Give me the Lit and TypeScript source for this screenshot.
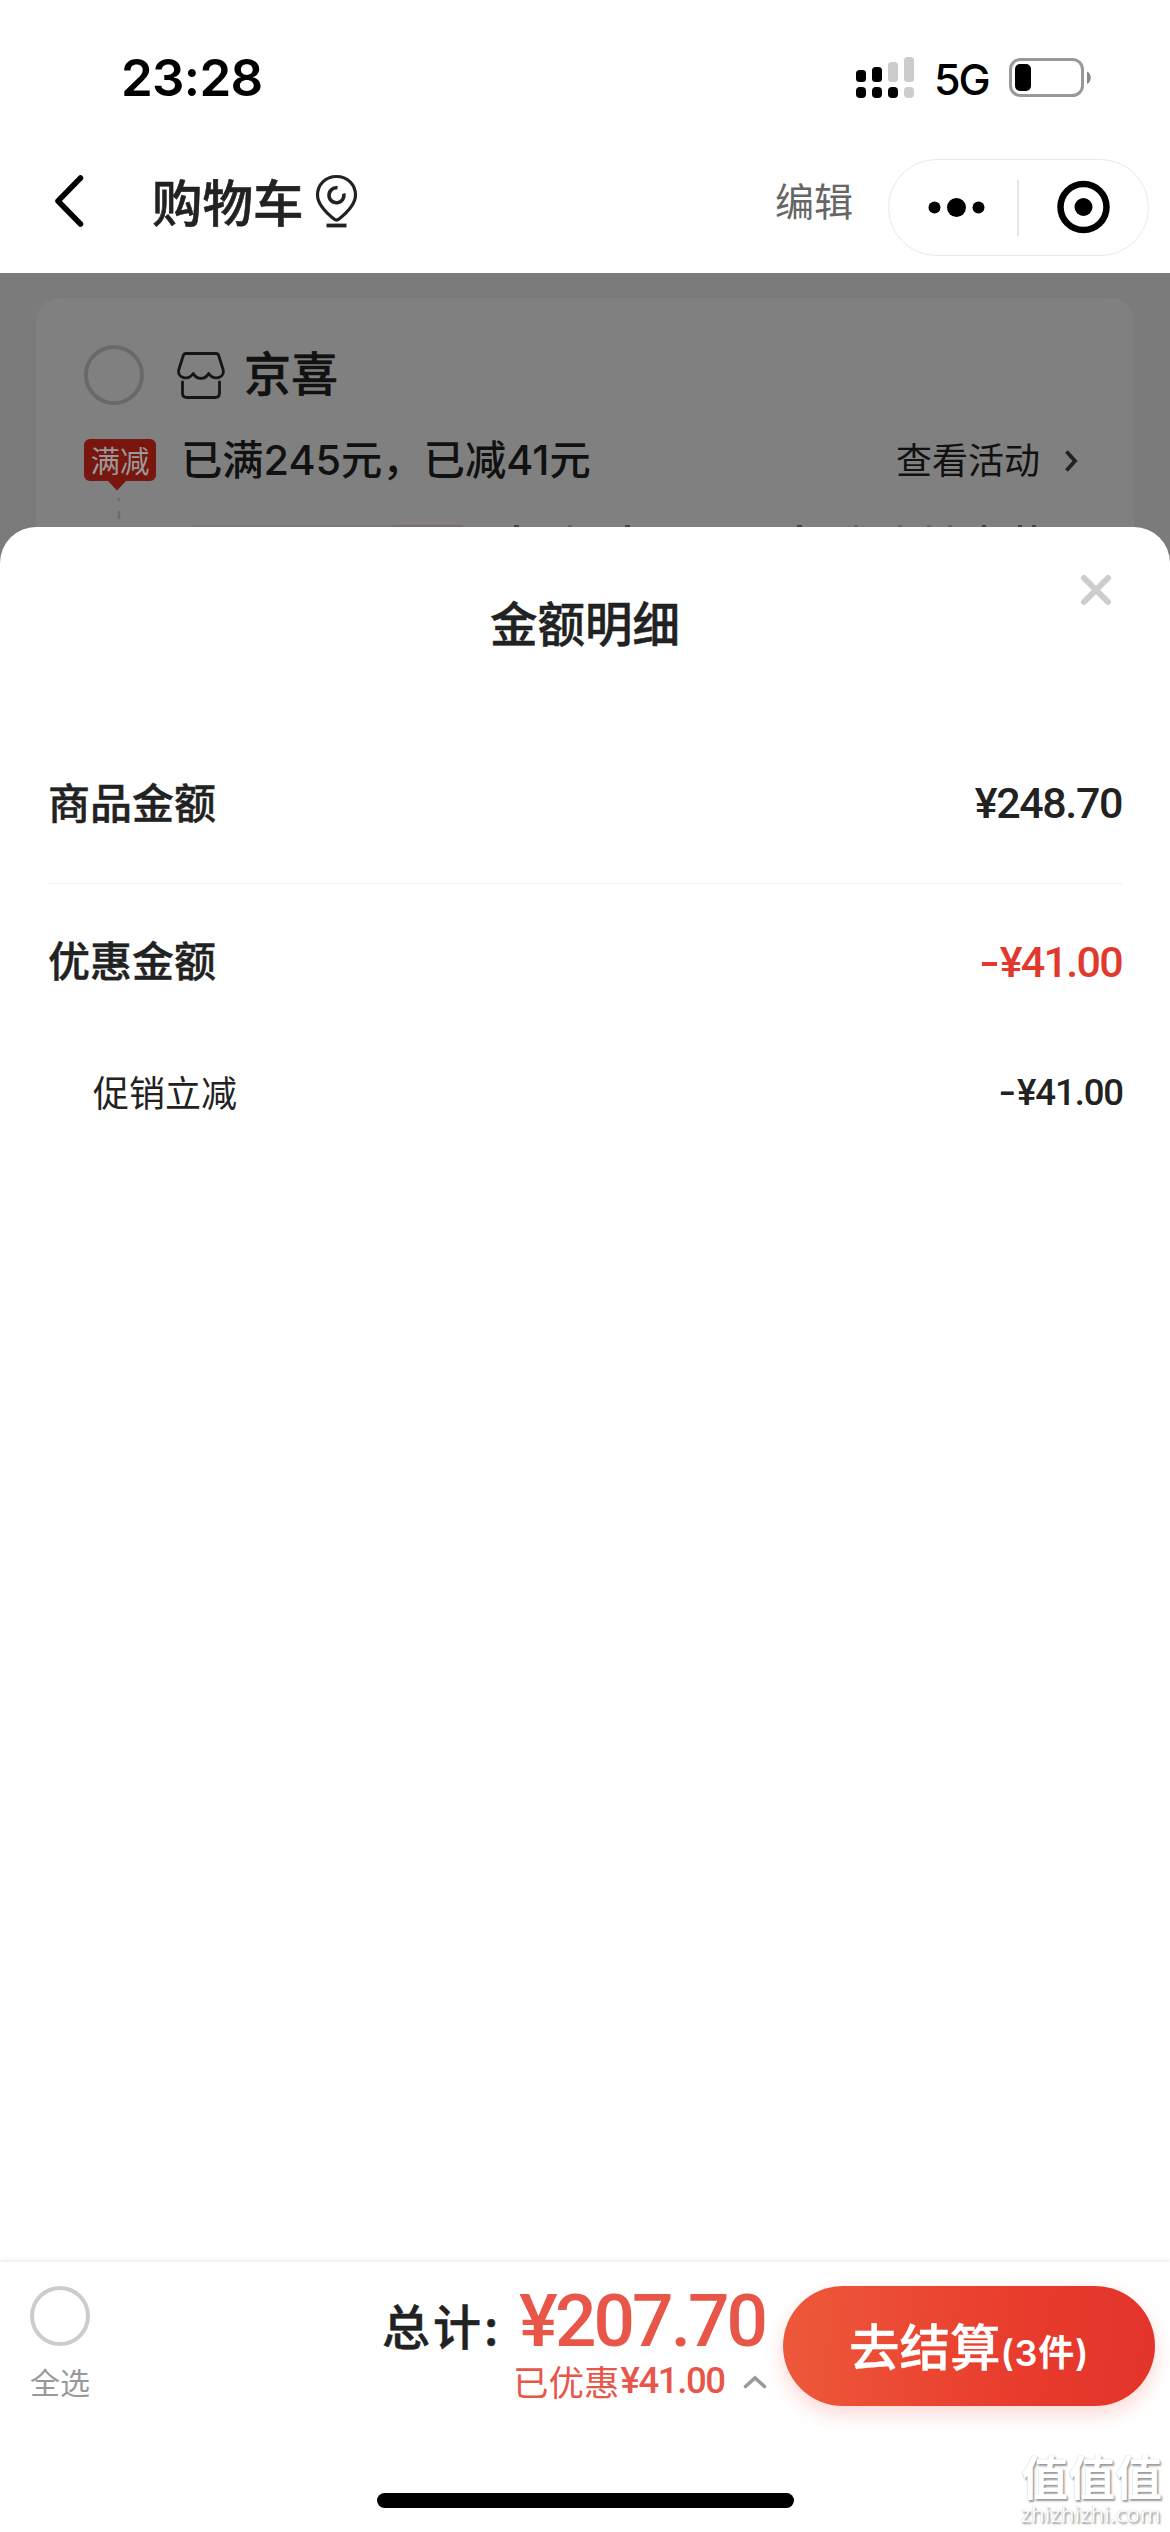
import { LitElement, html, css } from "lit";
import { customElement, property } from "lit/decorators.js";

@customElement("status-bar")
class StatusBar extends LitElement {
  static styles = css`
    :host { display: flex; align-items: center; height: 156px; padding: 0 78px 0 121px; box-sizing: border-box; }
    .time { flex: 1; font: 600 51px/60px Inter, sans-serif; letter-spacing: -0.7px; color: #000; }
    .signal { width: 58px; height: 42px; margin-right: 20px; }
    .net { font: 500 43px/60px Inter, sans-serif; width: 55px; letter-spacing: -2px; color: #000; margin-right: 20px; padding-top: 2px; }
    .battery { width: 83px; height: 40px; }
  `;
  render() {
    return html`
      <div class="time">23:28</div>
      <svg class="signal" viewBox="0 0 58 42">
        <rect x="0" y="13" width="10" height="12" rx="3.5" />
        <rect x="16" y="10" width="10" height="15" rx="3.5" />
        <rect x="32" y="5" width="10" height="20" rx="3.5" fill="#ccc" />
        <rect x="48" y="0" width="10" height="25" rx="3.5" fill="#ccc" />
        <rect x="0" y="30" width="10" height="11" rx="4" />
        <rect x="16" y="30" width="10" height="11" rx="4" />
        <rect x="32" y="30" width="10" height="11" rx="4" />
        <rect x="48" y="30" width="10" height="11" rx="4" fill="#ccc" />
      </svg>
      <div class="net">5G</div>
      <svg class="battery" viewBox="0 0 83 40">
        <rect x="1.5" y="1.5" width="72" height="36" rx="10" fill="none" stroke="#999" stroke-width="3" />
        <rect x="6" y="6" width="16" height="27" rx="5" />
        <path d="M78 13.5c5 2 5 10.5 0 12.5z" fill="#888" />
      </svg>
    `;
  }
}

@customElement("nav-header")
class NavHeader extends LitElement {
  static styles = css`
    :host { display: flex; align-items: center; height: 117px; padding: 0 21px 28px 52px; box-sizing: border-box; }
    .back { width: 34px; height: 56px; margin: 0 66px 0 0; }
    .title { font-size: 50.5px; font-weight: 500; -webkit-text-stroke: 0.6px #222; line-height: 60px; color: #222; width: 163px; margin-top: -2px; }
    .pin { width: 43px; height: 54px; }
    .space { flex: 1; }
    .edit { font-size: 39px; line-height: 60px; color: #666; width: 78px; margin: -3px 35px 0 0; }
    .capsule { width: 261px; height: 97px; box-sizing: border-box; border: 1.5px solid #e9e9e9; border-radius: 49px; margin-top: 13px; flex: none; }
    .capsule svg { display: block; width: 259px; height: 95px; }
  `;
  render() {
    return html`
      <svg class="back" viewBox="0 0 34 56">
        <path d="M28.5 5L6 28l22.5 23" fill="none" stroke="#000" stroke-width="5.5" stroke-linecap="round" stroke-linejoin="round" />
      </svg>
      <div class="title">购物车</div>
      <svg class="pin" viewBox="0 0 43 54" fill="none" stroke="#222" stroke-width="3.2">
        <path d="M21.5 2.5c-11 0-19 8-19 18.5 0 10 9 18 16.500 24q2.500 2 5 0c7.500-6 16.500-14 16.500-24 0-10.500-8-18.500-19-18.500z" />
        <path d="M22.500 13.800a7.500 7.500 0 1 0 6.300 5.700" stroke-width="3.6" />
        <path d="M11.500 51.500h20" stroke-width="3.800" />
      </svg>
      <div class="space"></div>
      <div class="edit">编辑</div>
      <div class="capsule">
        <svg viewBox="0 0 259 95">
          <circle cx="45.5" cy="47.500" r="6" /><circle cx="67.500" cy="47.500" r="9.500" /><circle cx="89.500" cy="47.500" r="6" />
          <path d="M129 20v56" stroke="#d4d4d4" stroke-width="1.200" />
          <circle cx="194.500" cy="47" r="23" fill="none" stroke="#000" stroke-width="6.500" /><circle cx="194.500" cy="47" r="9" />
        </svg>
      </div>
    `;
  }
}

@customElement("shop-card")
class ShopCard extends LitElement {
  static styles = css`
    :host { display: block; background: #808080; border-radius: 24px 24px 0 0; height: 260px; padding: 45px 54px 0 48px; box-sizing: border-box; color: #111; }
    .row { display: flex; align-items: center; height: 64px; }
    .check { width: 60px; height: 60px; box-sizing: border-box; border: 4px solid #696969; border-radius: 50%; margin-right: 33px; }
    .shop { width: 48px; height: 48px; margin-right: 19px; }
    .name { font-size: 47px; font-weight: 500; -webkit-text-stroke: 0.5px #111; line-height: 60px; margin-top: -8px; }
    .promo { margin-top: 23px; height: 60px; }
    .tag { width: 72px; height: 54px; margin: 11px 25px 0 0; }
    .label { background: #7a1610; color: #999; border-radius: 6px; font-size: 29.5px; line-height: 41px; height: 42px; text-align: center; }
    .tip { display: block; width: 18px; height: 10px; margin-left: 24px; }
    .text { font-family: Inter, "Noto Sans CJK SC", sans-serif; font-size: 41.3px; font-weight: 500; line-height: 60px; flex: 1; white-space: nowrap; margin-top: -1px; }
    .more { font-size: 36px; line-height: 60px; margin-top: -5px; }
    .chev { width: 14px; height: 24px; margin: 2px 2px 0 24px; }
    .dash { display: block; width: 4px; height: 22px; margin: 8px 0 0 33px; }
    .next { display: block; width: 900px; height: 2px; margin: 5px 0 0 106px; }
  `;
  render() {
    return html`
      <div class="row">
        <div class="check"></div>
        <svg class="shop" viewBox="0 0 48 48" fill="none" stroke="#151515" stroke-width="2.800" stroke-linejoin="round" stroke-linecap="round">
          <path d="M9 2.500h30q2 0 2.700 2l4.500 14.500c1.500 8-9.500 11-14.500 3.500-3.500 6.500-12 6.500-15.500 0-5 7.500-16 4.500-14.500-3.500L6.300 4.500Q7 2.500 9 2.500z" />
          <path d="M5.500 31v11q0 4.500 4.500 4.500h28q4.500 0 4.500-4.500V31" />
        </svg>
        <div class="name">京喜</div>
      </div>
      <div class="row promo">
        <div class="tag">
          <div class="label">满减</div>
          <svg class="tip" viewBox="0 0 18 10"><path d="M0 0h18L9 9.500z" fill="#7a1610" /></svg>
        </div>
        <div class="text">已满245元，已减41元</div>
        <div class="more">查看活动</div>
        <svg class="chev" viewBox="0 0 14 24"><path d="M2.500 2.500L11 12l-8.500 9.500" fill="none" stroke="#222" stroke-width="3.800" /></svg>
      </div>
      <svg class="dash" viewBox="0 0 4 22"><path d="M2 0v3M2 13v8" stroke="#6c6c6c" stroke-width="2.500" /></svg>
      <svg class="next" viewBox="0 0 900 2">
        <path d="M3 1h200" stroke="#7b7777" stroke-width="2" />
        <path d="M203 1h70" stroke="#7b6c6c" stroke-width="2" />
        <path d="M324 1h5M435 1h5M607 1h5M792 1h4M828 1h4M842 1h4" stroke="#444" stroke-width="2" />
        <path d="M378 1h4M664 1h4M708 1h4M737 1h4M758 1h4" stroke="#666" stroke-width="2" />
      </svg>
    `;
  }
}

@customElement("amount-row")
class AmountRow extends LitElement {
  @property() label = "";
  @property() value = "";
  @property() kind = "";
  @property({ type: Boolean }) minus = false;
  static styles = css`
    :host { display: flex; justify-content: space-between; align-items: center; color: #222; }
    .label { font-size: 42px; line-height: 60px; font-weight: 500; -webkit-text-stroke: 0.4px; margin-top: -4px; }
    .value { font: 500 43px/60px Roboto, sans-serif; letter-spacing: -1.4px; margin-top: -1px; }
    .value.discount { color: #e1392e; letter-spacing: -1.7px; margin-top: 1px; }
    .label.sub { font-size: 36px; font-weight: 400; -webkit-text-stroke: 0; margin-top: -3px; }
    .value.sub { font-size: 36.5px; letter-spacing: -1.1px; margin-right: -1px; margin-top: 2px; }
    .minus { display: inline-block; transform: scaleX(1.35); margin-right: 5px; }
  `;
  render() {
    return html`<span class="label ${this.kind}">${this.label}</span><span class="value ${this.kind}">${this.minus ? html`<span class="minus">-</span>` : ""}${this.value}</span>`;
  }
}

@customElement("amount-sheet")
class AmountSheet extends LitElement {
  static styles = css`
    :host { display: block; background: #fff; border-radius: 36px 36px 0 0; position: relative; z-index: 1; padding: 65px 48px 0; box-sizing: border-box; }
    .title { text-align: center; font-size: 47.5px; line-height: 60px; font-weight: 500; -webkit-text-stroke: 0.5px #222; color: #222; }
    .close { position: absolute; top: 46px; right: 57px; width: 34px; height: 34px; }
    .r1 { height: 60px; margin-top: 121px; padding-bottom: 50px; border-bottom: 1.5px solid #eee; }
    .r2 { height: 60px; margin-top: 47px; }
    .r3 { height: 60px; margin-top: 71px; padding-left: 45px; }
  `;
  render() {
    return html`
      <svg class="close" viewBox="0 0 34 34"><path d="M5 5l24 24m0-24l-24 24" stroke="#ccc" stroke-width="6" stroke-linecap="round" /></svg>
      <div class="title">金额明细</div>
      <amount-row class="r1" label="商品金额" value="¥248.70"></amount-row>
      <amount-row class="r2" label="优惠金额" value="¥41.00" minus kind="discount"></amount-row>
      <amount-row class="r3" label="促销立减" value="¥41.00" minus kind="sub"></amount-row>
    `;
  }
}

@customElement("checkout-bar")
class CheckoutBar extends LitElement {
  static styles = css`
    :host { display: flex; flex-direction: column; height: 270px; background: #fff; box-shadow: 0 -1px 5px rgba(0, 0, 0, 0.1); position: relative; z-index: 2; }
    .row { display: flex; height: 231px; padding: 24px 15px 0 30px; box-sizing: border-box; }
    .all { width: 60px; text-align: center; font-size: 30px; line-height: 40px; color: #999; white-space: nowrap; }
    .check { width: 60px; height: 60px; box-sizing: border-box; border: 4px solid #ccc; border-radius: 50%; margin-bottom: 15px; }
    .sum { font-size: 48px; font-weight: 500; -webkit-text-stroke: 0.5px #222; line-height: 60px; letter-spacing: 3px; color: #222; margin: 8px 0 0 292px; width: 134px; white-space: nowrap; }
    .prices { width: 267px; color: #e8564a; }
    .total { font: 500 73px/70px Roboto, sans-serif; letter-spacing: -2.9px; white-space: nowrap; padding-left: 3px; }
    .saved { display: flex; align-items: center; font-size: 35.5px; line-height: 50px; white-space: nowrap; margin: -1px 0 0 -3px; }
    .amt { font: 500 36.5px/50px Roboto, sans-serif; letter-spacing: -1.4px; margin-left: 1px; padding-top: 1px; }
    .up { width: 24px; height: 16px; margin: 3px 0 0 18px; }
    .btn { width: 372px; height: 120px; border-radius: 60px; background: linear-gradient(95deg, #ee593a, #e83b2d 65%, #e2342a); box-shadow: 0 8px 20px rgba(235, 60, 45, 0.2); color: #fff; font-weight: 500; -webkit-text-stroke: 0.4px #fff; display: flex; align-items: baseline; justify-content: center; box-sizing: border-box; font-size: 50.5px; line-height: 116px; white-space: nowrap; }
    .count { font-size: 36px; font-family: Inter, "Noto Sans CJK SC", sans-serif; font-weight: 600; letter-spacing: 0.7px; -webkit-text-stroke: 0; }
    .home { width: 417px; height: 15px; border-radius: 8px; background: #000; margin-left: 377px; }
    .mark { position: absolute; right: 8px; bottom: 5px; width: 141px; text-align: center; color: #fff; text-shadow: 1.5px 1.5px 2px #999, 0 0 1px #bbb; white-space: nowrap; }
    .cn { font-size: 47px; font-weight: 700; line-height: 44px; margin-bottom: 4px; }
    .en { font: 500 22.3px/26px "Open Sans", sans-serif; margin-left: -2px; }
  `;
  render() {
    return html`
      <div class="row">
        <div class="all"><div class="check"></div>全选</div>
        <div class="sum">总计:</div>
        <div class="prices">
          <div class="total">¥207.70</div>
          <div class="saved">已优惠<span class="amt">¥41.00</span>
            <svg class="up" viewBox="0 0 24 16"><path d="M2.500 12.500L12 4l9.500 8.500" fill="none" stroke="#999" stroke-width="3.600" stroke-linecap="round" /></svg>
          </div>
        </div>
        <div class="btn"><span>去结算</span><span class="count">(3件)</span></div>
      </div>
      <div class="home"></div>
      <div class="mark"><div class="cn">值值值</div><div class="en">zhizhizhi.com</div></div>
    `;
  }
}

@customElement("app-root")
class AppRoot extends LitElement {
  static styles = css`
    :host { display: flex; flex-direction: column; width: 1170px; height: 2532px; overflow: hidden; background: #fff; font-family: "Noto Sans CJK SC", sans-serif; }
    .cart { height: 254px; background: #7b7b7b; padding: 25px 36px 0; box-sizing: border-box; }
    .body { flex: 1; display: flex; flex-direction: column; background: #7b7b7b; }
    amount-sheet { flex: 1; }
  `;
  render() {
    return html`
      <status-bar></status-bar>
      <nav-header></nav-header>
      <div class="body">
        <div class="cart"><shop-card></shop-card></div>
        <amount-sheet></amount-sheet>
      </div>
      <checkout-bar></checkout-bar>
    `;
  }
}
